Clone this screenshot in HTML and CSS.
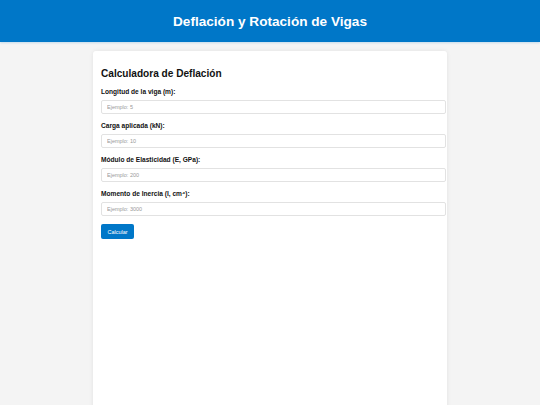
FILE: index.html
```html
<!DOCTYPE html>
<html lang="es">
<head>
<meta charset="utf-8">
<title>Deflación y Rotación de Vigas</title>
<link rel="stylesheet" href="styles.css">
</head>
<body>
<header class="top">
  <h1 class="top-title">Deflación y Rotación de Vigas</h1>
</header>
<main class="card">
  <h2 class="card-title">Calculadora de Deflación</h2>
  <label class="field-label" for="l">Longitud de la viga (m):</label>
  <input class="field-input" id="l" type="text" placeholder="Ejemplo: 5">
  <label class="field-label" for="p">Carga aplicada (kN):</label>
  <input class="field-input" id="p" type="text" placeholder="Ejemplo: 10">
  <label class="field-label" for="e">Módulo de Elasticidad (E, GPa):</label>
  <input class="field-input" id="e" type="text" placeholder="Ejemplo: 200">
  <label class="field-label" for="i">Momento de Inercia (I, cm⁴):</label>
  <input class="field-input" id="i" type="text" placeholder="Ejemplo: 3000">
  <button class="btn" type="button">Calcular</button>
</main>
</body>
</html>
```
FILE: styles.css
```css
html, body {
  margin: 0;
  padding: 0;
}
body {
  background: #f4f4f4;
  font-family: "Liberation Sans", Arial, sans-serif;
  color: #111;
}
.top {
  background: #0077c8;
  height: 42px;
  display: flex;
  align-items: center;
  justify-content: center;
  box-shadow: 0 1px 2px rgba(0, 119, 200, 0.2);
}
.top-title {
  margin: 0;
  color: #fff;
  font-size: 13.6px;
  font-weight: bold;
}
.card {
  display: block;
  width: 338px;
  margin: 9px auto 0;
  padding: 13px 8px 8px;
  background: #fff;
  border-radius: 3px;
  box-shadow: 0 0 4px rgba(0, 0, 0, 0.08);
  min-height: 400px;
}
.card-title {
  margin: 0 0 4px;
  font-size: 10.1px;
  font-weight: bold;
  line-height: 20px;
}
.field-label {
  display: block;
  font-size: 6.6px;
  font-weight: bold;
  line-height: 8px;
  margin-bottom: 4px;
}
.field-input {
  display: block;
  height: 14px;
  padding: 0 5px;
  margin: 0 0 8px;
  border: 1px solid #e2e2e2;
  border-radius: 2px;
  font-size: 5.5px;
  font-family: "Liberation Sans", Arial, sans-serif;
  box-sizing: border-box;
  width: 345px;
}
.field-input::placeholder {
  color: #999;
}
.btn {
  display: block;
  background: #0077c8;
  color: #fff;
  border: none;
  border-radius: 2px;
  font-size: 5.5px;
  font-family: "Liberation Sans", Arial, sans-serif;
  padding: 0;
  height: 15px;
  width: 33px;
}
```
